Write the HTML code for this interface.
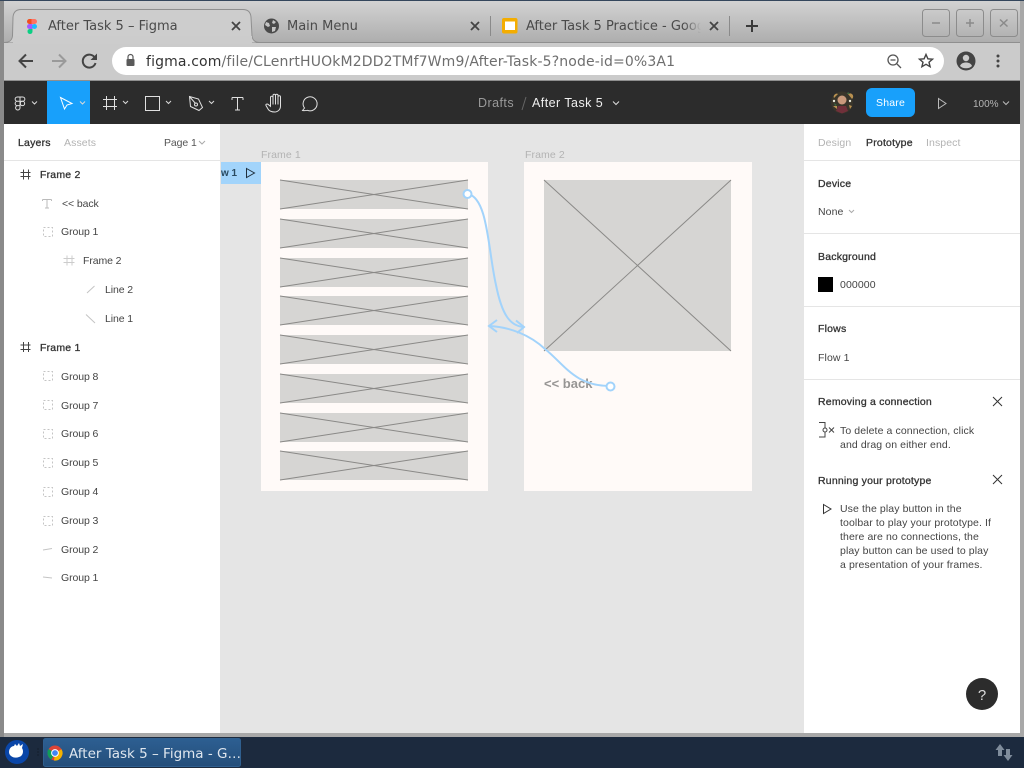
<!DOCTYPE html>
<html><head><meta charset="utf-8"><title>After Task 5 – Figma</title>
<style>
html,body{margin:0;padding:0;width:1024px;height:768px;overflow:hidden;background:#1c2a3e}
svg{position:absolute;left:0;top:0}
text{white-space:pre}
.b{font-family:"DejaVu Sans",sans-serif;font-size:13px;fill:#4a4a4a}
.f{font-family:"Liberation Sans",sans-serif;font-size:10.5px;fill:#444;letter-spacing:.1px}
.h{font-family:"Liberation Sans",sans-serif;font-size:10.5px;fill:#333;stroke:#333;stroke-width:.3px;letter-spacing:.2px}
.l text{letter-spacing:-.1px}
</style></head><body>
<svg width="1024" height="768" viewBox="0 0 1024 768" xmlns="http://www.w3.org/2000/svg">
<defs>
<linearGradient id="tb" x1="0" y1="0" x2="0" y2="1"><stop offset="0" stop-color="#d2d2d2"/><stop offset="1" stop-color="#adadad"/></linearGradient>
<linearGradient id="tk" x1="0" y1="0" x2="0" y2="1"><stop offset="0" stop-color="#2d5f92"/><stop offset="1" stop-color="#244e7a"/></linearGradient>
<linearGradient id="fade" gradientUnits="userSpaceOnUse" x1="684" y1="0" x2="701" y2="0"><stop offset="0" stop-color="#fff"/><stop offset="1" stop-color="#000"/></linearGradient>
<mask id="tm" maskUnits="userSpaceOnUse" x="520" y="10" width="190" height="30"><rect x="520" y="10" width="190" height="30" fill="url(#fade)"/></mask>
</defs>
<!-- window -->
<rect width="1024" height="768" fill="#8d8d8d"/>
<rect width="1024" height="1" fill="#34465c"/>
<rect x="0" y="1" width="4" height="735" fill="#8a8a8a"/>
<rect x="1020" y="1" width="4" height="735" fill="#a8a8a8"/>
<rect x="4" y="1" width="1016" height="42" fill="url(#tb)"/>
<rect x="4" y="42" width="1016" height="1" fill="#8f8f8f"/>
<rect x="4" y="43" width="1016" height="37" fill="#cbcbcb"/>
<rect x="4" y="80" width="1016" height="1" fill="#8f8f8f"/>
<!-- active tab -->
<path d="M4 42.500C10 42.500 12 40 12.500 36L13 17C13.500 12 16 9.500 21 9.500L243 9.500C248 9.500 250.500 12 251 17L252 36C252.500 40 255 42.500 260 42.500" fill="#cdcdcd" stroke="#8f8f8f" stroke-width="1"/>
<rect x="13" y="36" width="239" height="8" fill="#cccccc"/>
<!-- figma logo tab -->
<g transform="translate(-.5,1)">
<path d="M30 18h3.500v5H30a2.500 2.500 0 0 1 0-5z" fill="#f24e1e"/>
<path d="M32 18h3a2.500 2.500 0 0 1 0 5h-3z" fill="#ff7262"/>
<path d="M30 23h3v5h-3a2.500 2.500 0 0 1 0-5z" fill="#a259ff"/>
<circle cx="35" cy="25.500" r="2.500" fill="#1abcfe"/>
<path d="M30 28h3v2.500a2.500 2.500 0 1 1-3-2.500z" fill="#0acf83"/>
</g>
<text x="48" y="30" class="b">After Task 5 – Figma</text>
<path d="M232 22l8 8M240 22l-8 8" stroke="#444" stroke-width="1.800"/>
<!-- globe tab -->
<circle cx="271.500" cy="26" r="7.500" fill="#4a4a4a"/>
<path d="M266 22l3 1 1 3-2 1-3-2zM273 20l3 2-2 2-2-1zM272 27l4 0-1 4-3 1z" fill="#c4c4c4"/>
<text x="287" y="30" class="b">Main Menu</text>
<path d="M471 22l8 8M479 22l-8 8" stroke="#444" stroke-width="1.800"/>
<rect x="490" y="16" width="1" height="20" fill="#8a8a8a"/>
<!-- slides tab -->
<rect x="502" y="18" width="15.500" height="15.500" rx="2" fill="#f4ad00"/>
<rect x="505" y="21.500" width="10" height="8.500" fill="#fff"/>
<text x="526" y="30" class="b" mask="url(#tm)">After Task 5 Practice - Goog</text>
<path d="M710 22l8 8M718 22l-8 8" stroke="#444" stroke-width="1.800"/>
<rect x="729" y="16" width="1" height="20" fill="#8a8a8a"/>
<path d="M752 20v12M746 26h12" stroke="#3a3a3a" stroke-width="2"/>
<!-- window buttons -->
<g fill="none" stroke="#8c8c8c"><rect x="922.500" y="9.500" width="27" height="27" rx="3"/><rect x="956.500" y="9.500" width="27" height="27" rx="3"/><rect x="990.500" y="9.500" width="27" height="27" rx="3"/></g>
<path d="M932 23h8M966 23h8M970 19v8M1000 19.500l7.500 7M1007.500 19.500l-7.500 7" stroke="#8a8a8a" stroke-width="1.500" fill="none"/>
<!-- nav -->
<path d="M33 61H20M26 54.500L19.500 61l6.500 6.500" fill="none" stroke="#444" stroke-width="2"/>
<path d="M52 61h13M59 54.500l6.500 6.500-6.500 6.500" fill="none" stroke="#9a9a9a" stroke-width="2"/>
<path d="M95.500 63a6.500 6.500 0 1 1-.5-5" fill="none" stroke="#444" stroke-width="2"/>
<path d="M97 53.500v6.500h-6.500z" fill="#444"/>
<rect x="112" y="47" width="832" height="28" rx="14" fill="#fff"/>
<rect x="126.500" y="59" width="8" height="7" rx="1" fill="#5a5a5a"/>
<path d="M128 59v-2a2.500 2.500 0 0 1 5 0v2" fill="none" stroke="#5a5a5a" stroke-width="1.200"/>
<text x="146" y="66" font-family="DejaVu Sans,sans-serif" font-size="14" fill="#333" letter-spacing=".14">figma.com<tspan fill="#6e6e6e">/file/CLenrtHUOkM2DD2TMf7Wm9/After-Task-5?node-id=0%3A1</tspan></text>
<circle cx="893" cy="60" r="5" fill="none" stroke="#555" stroke-width="1.300"/><path d="M890.500 60h5M897 64l4 4" stroke="#555" stroke-width="1.300"/>
<path d="M926 54.500l1.900 4.300 4.600.4-3.500 3 1.100 4.500-4.100-2.400-4.100 2.400 1.100-4.500-3.500-3 4.600-.4z" fill="none" stroke="#444" stroke-width="1.400"/>
<circle cx="966" cy="61" r="9.500" fill="#444"/><circle cx="966" cy="58" r="3.200" fill="#cbcbcb"/><path d="M960 66c1-3 4-3.500 6-3.500s5 .5 6 3.500c-1.500 1.500-3.500 2.300-6 2.300s-4.500-.8-6-2.300z" fill="#cbcbcb"/>
<g fill="#444"><circle cx="998" cy="56" r="1.500"/><circle cx="998" cy="61" r="1.500"/><circle cx="998" cy="66" r="1.500"/></g>

<!-- figma toolbar -->
<rect x="4" y="81" width="1016" height="43" fill="#2c2c2c"/>
<rect x="47" y="81" width="43" height="43" fill="#18a0fb"/>
<g fill="none" stroke="#e0e0e0" stroke-width="1">
<path d="M20 97h-2.700a2.150 2.150 0 0 0 0 4.300H20zM20 97h2.700a2.150 2.150 0 0 1 0 4.300H20zM20 101.300h-2.700a2.150 2.150 0 0 0 0 4.300H20zM20 105.600h-2.700a2.200 2.200 0 1 0 2.700 2.200z"/><circle cx="22.500" cy="103.450" r="2.150"/>
<path d="M60.500 97.500l11.500 6-5 1.500-2.500 4z" stroke="#fff"/>
<path d="M106.500 96v14M114.500 96v14M103 99.500h14M103 106.500h14"/>
<rect x="145.500" y="96.500" width="14" height="14"/>
<path d="M189.500 96.500l9 2.500 4 8.500-3.500 3-8.500-4zM189.500 96.500l6 7"/>
<circle cx="196" cy="104.500" r="1.500"/>
<path d="M232 97.500h11M237.500 97.500v12.500M235 110h5M232 97.500v2.500M243 97.500v2.500"/>
<path d="M275 112c-3.500 0-6-1-7-3l-2-3.500c-.5-1 .8-2 2-1.200l2.500 2V97.500c0-1.600 2.500-1.600 2.500 0V95.500c0-1.600 2.500-1.600 2.500 0V95.500c0-1.600 2.500-1.600 2.500 0V97c0-1.600 2.500-1.600 2.500 0v9c0 3.500-2.500 6-6 6zM273 97.500v7M275.500 95.500v9M278 95.500v9"/>
<path d="M302.500 110.500l2-2.500a7 7 0 1 1 3 2.300c-1.700.4-3.500.5-5 .2z"/>
</g>
<g fill="none" stroke-width="1" stroke="#d8d8d8"><path d="M32 101.500l2.500 2.500 2.500-2.500M80 101.500l2.500 2.500 2.500-2.500"/><path d="M123 101l2.500 2.500 2.500-2.500M166 101l2.500 2.500 2.500-2.500M209 101l2.500 2.500 2.500-2.500"/></g>
<text x="478" y="107" font-family="Liberation Sans,sans-serif" font-size="12.500" fill="#9a9a9a" letter-spacing=".45">Drafts</text>
<path d="M526 97l-4 13" stroke="#666"/>
<text x="532" y="107" font-family="Liberation Sans,sans-serif" font-size="12.500" fill="#f0f0f0" letter-spacing=".45">After Task 5</text>
<path d="M613 101.500l3 3 3-3" fill="none" stroke="#ddd"/>
<circle cx="842" cy="102.500" r="11" fill="#39352a"/>
<circle cx="842" cy="100" r="4.500" fill="#c99a7c"/><path d="M834 98a3 3 0 0 1 4-4zM848 94a3 3 0 0 1 4 5zM833 106l4 0 0 3zM849 105l3 1-2 3z" fill="#b89050"/><path d="M838 106h8l2 5-6 2.500-6-2.500z" fill="#70303a"/><circle cx="834" cy="101" r="1.200" fill="#e8e8d8"/><circle cx="850" cy="101" r="1.200" fill="#e8e8d8"/><path d="M834 103l3 2-2 1zM848 92l2 2-3 0z" fill="#3f6a40"/>
<rect x="866" y="88" width="49" height="29" rx="6" fill="#18a0fb"/>
<text x="890.500" y="106" text-anchor="middle" font-family="Liberation Sans,sans-serif" font-size="10.500" fill="#fff" letter-spacing=".2">Share</text>
<path d="M938.500 98.500l7.500 5-7.500 5z" fill="none" stroke="#bbb"/>
<text x="973" y="107" font-family="Liberation Sans,sans-serif" font-size="10" fill="#b5b5b5">100%</text>
<path d="M1003 101.500l3 3 3-3" fill="none" stroke="#bbb"/>

<!-- panels -->
<rect x="4" y="124" width="216" height="609" fill="#fff"/>
<rect x="220" y="124" width="584" height="609" fill="#e5e5e5"/>
<rect x="804" y="124" width="216" height="609" fill="#fff"/>
<rect x="0" y="733" width="1024" height="4" fill="#a8a8a8"/>
<rect x="0" y="733" width="4" height="4" fill="#8a8a8a"/>

<!-- left -->
<text x="18" y="146" class="h">Layers</text>
<text x="64" y="146" class="f" style="fill:#b3b3b3">Assets</text>
<g class="l"><text x="164" y="146" class="f" style="fill:#555">Page 1</text></g>
<path d="M199 141l3 3 3-3" fill="none" stroke="#aaa"/>
<rect x="4" y="160" width="216" height="1" fill="#e5e5e5"/>
<g fill="none" stroke="#444" stroke-width="1">
<path d="M23.500 169.500v10M28.500 169.500v10M20.500 172.500h10M20.500 176.500h10"/>
<path d="M23.500 342v10M28.500 342v10M20.500 345h10M20.500 349.500h10"/></g>
<path d="M67 255.500v10M72 255.500v10M63.500 258.500h11M63.500 262.500h11" stroke="#ccc" fill="none"/>
<text x="40" y="178" class="h">Frame 2</text>
<path d="M42.500 199.500h9M47 199.500v8.500M45 208h4M42.500 199.500v1.500M51.500 199.500v1.500" stroke="#bbb" fill="none"/>
<path d="M87 293l7.500-7M86 314.500l9 8.500" stroke="#c4c4c4" fill="none"/>
<text x="40" y="351" class="h">Frame 1</text>
<g class="l">
<text x="62" y="207" class="f">&lt;&lt; back</text>
<text x="61" y="235" class="f">Group 1</text>
<text x="83" y="264" class="f">Frame 2</text>
<text x="105" y="293" class="f">Line 2</text>
<text x="105" y="322" class="f">Line 1</text>
<text x="61" y="380" class="f">Group 8</text>
<text x="61" y="409" class="f">Group 7</text>
<text x="61" y="437" class="f">Group 6</text>
<text x="61" y="466" class="f">Group 5</text>
<text x="61" y="495" class="f">Group 4</text>
<text x="61" y="524" class="f">Group 3</text>
<text x="61" y="553" class="f">Group 2</text>
<text x="61" y="581" class="f">Group 1</text>
</g>
<g fill="none" stroke="#c4c4c4" stroke-dasharray="2 2"><rect x="43.500" y="227.500" width="9" height="9"/><rect x="43.500" y="371.500" width="9" height="9"/><rect x="43.500" y="400.500" width="9" height="9"/><rect x="43.500" y="429.500" width="9" height="9"/><rect x="43.500" y="458.500" width="9" height="9"/><rect x="43.500" y="487.500" width="9" height="9"/><rect x="43.500" y="516.500" width="9" height="9"/></g>
<path d="M43 550l9-1.500M43 577l9 1" stroke="#c4c4c4" fill="none"/>

<!-- canvas -->
<text x="261" y="158" class="f" style="fill:#b3b3b3">Frame 1</text>
<text x="525" y="158" class="f" style="fill:#b3b3b3">Frame 2</text>
<rect x="261" y="162" width="227" height="329" fill="#fffaf8"/>
<rect x="524" y="162" width="228" height="329" fill="#fffaf8"/>
<rect x="221" y="162" width="40" height="22" fill="#a2d4fb"/>
<text x="221" y="176" font-family="Liberation Sans,sans-serif" font-weight="bold" font-size="10" fill="#2a4a60">w 1</text>
<path d="M246.500 168.500l8 4.500-8 4.500z" fill="none" stroke="#1f2f3c" stroke-width="1"/>
<g fill="#d6d5d3" stroke="none">
<rect x="280" y="180" width="188" height="29"/><rect x="280" y="219" width="188" height="29"/><rect x="280" y="258" width="188" height="29"/><rect x="280" y="296" width="188" height="29"/><rect x="280" y="335" width="188" height="29"/><rect x="280" y="374" width="188" height="29"/><rect x="280" y="413" width="188" height="29"/><rect x="280" y="451" width="188" height="29"/>
<rect x="544" y="180" width="187" height="171"/>
</g>
<g stroke="#8a8987" stroke-width="1" fill="none">
<path d="M280 180L468 209M280 209L468 180"/><path d="M280 219L468 248M280 248L468 219"/><path d="M280 258L468 287M280 287L468 258"/><path d="M280 296L468 325M280 325L468 296"/><path d="M280 335L468 364M280 364L468 335"/><path d="M280 374L468 403M280 403L468 374"/><path d="M280 413L468 442M280 442L468 413"/><path d="M280 451L468 480M280 480L468 451"/>
<path d="M544 180L731 351M544 351L731 180"/>
</g>
<text x="544" y="388" font-family="Liberation Sans,sans-serif" font-weight="bold" font-size="13" fill="#979594">&lt;&lt; back</text>
<g fill="none" stroke="#a2d3fb" stroke-width="2">
<path d="M468 194C488 198 488 250 496 285C502 315 510 326 524 327"/>
<path d="M516 320.500l8 6.500-7 6"/>
<path d="M610 386C575 386 565 365 545 349C530 335 510 327 489 326"/>
<path d="M497 320l-8 6 8 6"/>
<circle cx="467.500" cy="194" r="4" fill="#fff"/>
<circle cx="610.500" cy="386.500" r="4" fill="#fff"/>
</g>

<!-- right -->
<text x="818" y="146" class="f" style="fill:#b3b3b3">Design</text>
<text x="866" y="146" class="h">Prototype</text>
<text x="926" y="146" class="f" style="fill:#b3b3b3">Inspect</text>
<rect x="804" y="160" width="216" height="1" fill="#e5e5e5"/>
<text x="818" y="187" class="h">Device</text>
<text x="818" y="215" class="f">None</text>
<path d="M849 210l2.500 2.500 2.500-2.500" fill="none" stroke="#aaa"/>
<rect x="804" y="233" width="216" height="1" fill="#e5e5e5"/>
<text x="818" y="260" class="h">Background</text>
<rect x="818" y="277" width="15" height="15" fill="#000"/>
<text x="840" y="288" class="f">000000</text>
<rect x="804" y="306" width="216" height="1" fill="#e5e5e5"/>
<text x="818" y="332" class="h">Flows</text>
<text x="818" y="361" class="f">Flow 1</text>
<rect x="804" y="379" width="216" height="1" fill="#e5e5e5"/>
<text x="818" y="405" class="h">Removing a connection</text>
<path d="M993 397l9 9M1002 397l-9 9M993 475l9 9M1002 475l-9 9" stroke="#333" fill="none"/>
<path d="M819 422.500h6v14.500h-6" fill="none" stroke="#444"/>
<circle cx="825" cy="430" r="2" fill="#fff" stroke="#444"/>
<path d="M829 427.500l5 5M834 427.500l-5 5" stroke="#444"/>
<text x="840" y="434" class="f">To delete a connection, click</text>
<text x="840" y="448" class="f">and drag on either end.</text>
<text x="818" y="484" class="h">Running your prototype</text>
<path d="M823.500 504.500l7.500 4.500-7.500 4.500z" fill="none" stroke="#333"/>
<text x="840" y="512" class="f">Use the play button in the</text>
<text x="840" y="526" class="f">toolbar to play your prototype. If</text>
<text x="840" y="540" class="f">there are no connections, the</text>
<text x="840" y="554" class="f">play button can be used to play</text>
<text x="840" y="568" class="f">a presentation of your frames.</text>
<circle cx="982" cy="694" r="16" fill="#2c2c2c"/>
<text x="982" y="700" text-anchor="middle" font-family="Liberation Sans,sans-serif" font-size="15" fill="#dcdcdc">?</text>

<!-- taskbar -->
<rect x="0" y="737" width="1024" height="31" fill="#1c2a3e"/>
<circle cx="17" cy="752" r="12" fill="#0a46a8"/>
<path d="M9 752c0-4 3-6 5-6l1-2 2 2 2-3 1 3 3-2-1 4c2 3 1 8-3 9-5 2-10-1-10-5z" fill="#fff"/>
<path d="M37 749h2M37 752h2M37 755h2" stroke="#131d2c"/>
<rect x="43.500" y="738.500" width="197" height="28" rx="2" fill="url(#tk)" stroke="#2f5f8f"/>
<circle cx="55" cy="753" r="7.500" fill="#db4437"/>
<path d="M55 753L48.500 749a7.500 7.500 0 0 0 3 10.500z" fill="#0f9d58"/>
<path d="M55 753l6.500-3.700a7.500 7.500 0 0 1-7.500 11.200z" fill="#f4b400"/>
<circle cx="55" cy="753" r="3.400" fill="#4285f4" stroke="#fff" stroke-width="1"/>
<text x="69" y="758" font-family="DejaVu Sans,sans-serif" font-size="13.500" fill="#dfe6ee">After Task 5 – Figma - G…</text>
<path d="M1000 744l4.500 6h-2.500v6h-4v-6h-2.500z" fill="#7f8c9b"/>
<path d="M1008 761l-4.500-6h2.500v-6h4v6h2.500z" fill="#7f8c9b"/>
</svg>
</body></html>
